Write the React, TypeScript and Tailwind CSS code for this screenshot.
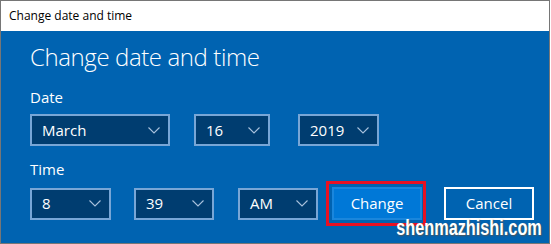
import React from 'react';

const font = { fontFamily: '"Open Sans", "Liberation Sans", sans-serif' };

function Chevron() {
  return (
    <svg width="12" height="7" viewBox="0 0 12 7" className="shrink-0">
      <path d="M0.5 0.5 L6 6 L11.5 0.5" fill="none" stroke="#a9c2dd" strokeWidth="1.1" />
    </svg>
  );
}

function Dropdown({ value, width }: { value: string; width: string }) {
  return (
    <div
      className={`${width} h-[32px] flex items-center justify-between border-2 border-[#78a6d6] bg-[#003d70] pl-[10px] pr-[8px] text-[15px] text-white`}
    >
      <span>{value}</span>
      <Chevron />
    </div>
  );
}

export default function App() {
  return (
    <div className="w-[551px] h-[244px] bg-white" style={font}>
      <div className="relative w-[550px] h-[244px] border border-[#767676] flex flex-col overflow-hidden">
        {/* Title bar */}
        <div className="h-[30px] bg-white flex items-center pl-[8px] text-[12px] text-black shrink-0">
          Change date and time
        </div>

        {/* Content */}
        <div className="flex-1 bg-[#0063b1] pl-[29px] text-white">
          <h1 className="text-[24px] font-light leading-none mt-[14px] tracking-[-0.4px]">Change date and time</h1>

          <p className="text-[15px] leading-none mt-[21px]">Date</p>
          <div className="flex mt-[9px]">
            <Dropdown value="March" width="w-[140px]" />
            <div className="ml-[24px]"><Dropdown value="16" width="w-[76px]" /></div>
            <div className="ml-[28px]"><Dropdown value="2019" width="w-[81px]" /></div>
          </div>

          <p className="text-[15px] leading-none mt-[16px]">Time</p>
          <div className="flex items-center mt-[10px]">
            <Dropdown value="8" width="w-[81px]" />
            <div className="ml-[23px]"><Dropdown value="39" width="w-[80px]" /></div>
            <div className="ml-[24px]"><Dropdown value="AM" width="w-[80px]" /></div>

            <div className="ml-[8px] -my-[6px] border-[3px] border-[#e81123] pt-[3px] pb-[3px] pl-[3px] pr-[1px]">
              <button className="w-[90px] h-[33px] bg-[#0078d7] border-2 border-[#1a86dc] text-[15px] text-white">
                Change
              </button>
            </div>
            <button className="ml-[18px] w-[90px] h-[33px] border-2 border-white text-[15px] text-white">
              Cancel
            </button>
          </div>
        </div>

        {/* Watermark */}
        <div
          className="absolute right-[7px] bottom-[4px] text-[22px] font-bold text-white leading-none origin-right [transform:scaleX(0.74)]"
          style={{ fontFamily: '"Liberation Sans", sans-serif', textShadow: '1px 1px 2px #555' }}
        >
          shenmazhishi.com
        </div>
      </div>
    </div>
  );
}
